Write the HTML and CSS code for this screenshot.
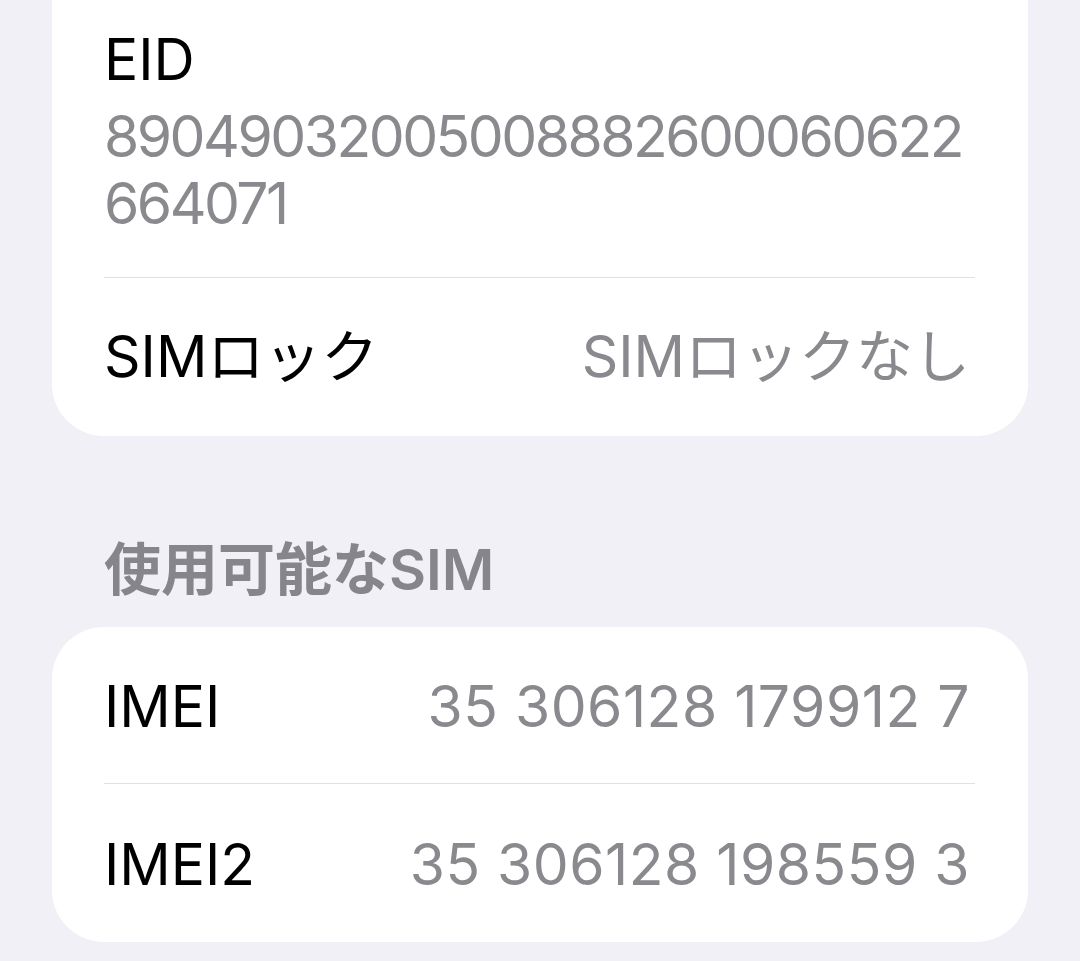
FILE: index.html
```html
<!DOCTYPE html>
<html lang="ja">
<head>
    <meta charset="UTF-8">
    <meta name="viewport" content="width=device-width, initial-scale=1.0">
    <title>情報</title>
    <link rel="stylesheet" href="styles.css">
</head>
<body>

    <section class="group group-first">
        <div class="cell cell-stack">
            <div class="label">EID</div>
            <div class="eid-value">89049032005008882600060622664071</div>
        </div>
        <div class="cell cell-row">
            <span class="label">SIMロック</span>
            <span class="value">SIMロックなし</span>
        </div>
    </section>

    <h2 class="group-title">使用可能なSIM</h2>

    <section class="group">
        <div class="cell cell-row">
            <span class="label">IMEI</span>
            <span class="value value-num">35 306128 179912 7</span>
        </div>
        <div class="cell cell-row cell-last">
            <span class="label">IMEI2</span>
            <span class="value value-num">35 306128 198559 3</span>
        </div>
    </section>

</body>
</html>
```

FILE: styles.css
```css
body {
    margin: 0;
    background-color: #f1f0f6;
    font-family: "Inter", "Noto Sans CJK JP", sans-serif;
    font-size: 57px;
    line-height: 67px;
    color: #000000;
    overflow: hidden;
}

.group {
    margin: 0 52px;
    background-color: #ffffff;
    border-radius: 52px;
    padding-left: 52px;
}

.group-first {
    margin-top: -60px;
}

.cell {
    margin-right: 53px;
    border-bottom: 1px solid #e1e1e4;
}

.cell:last-child {
    border-bottom: none;
}

.cell-stack {
    padding-top: 86px;
    padding-bottom: 40px;
}

.eid-value {
    margin-top: 10px;
    color: #8a8a8e;
    letter-spacing: -2.5px;
    word-break: break-all;
}

.cell-row {
    display: flex;
    justify-content: space-between;
    align-items: center;
    padding-top: 46px;
    padding-bottom: 43px;
}

.group-first .cell-row {
    padding-top: 45px;
    padding-bottom: 46px;
}

.cell-last {
    padding-top: 47px;
    padding-bottom: 44px;
}

.value {
    color: #8a8a8e;
    padding-right: 5px;
}

.value-num {
    letter-spacing: 0.5px;
}

.group-title {
    margin: 102px 0 25px 104px;
    font-size: 57px;
    line-height: 64px;
    font-weight: 600;
    color: #85858a;
}
```
